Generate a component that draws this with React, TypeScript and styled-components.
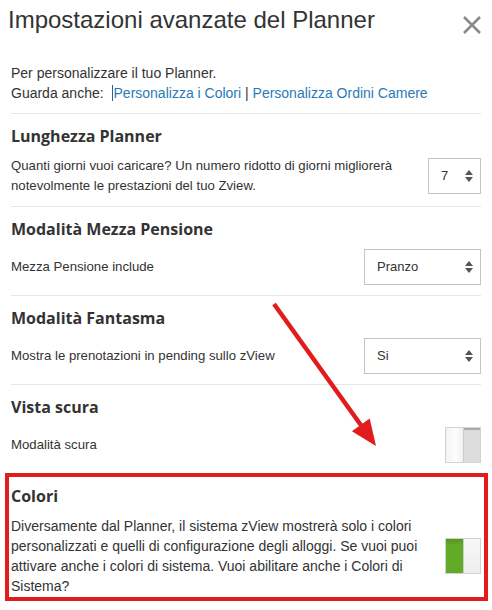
import React from 'react';
import styled, { createGlobalStyle } from 'styled-components';

const GlobalStyle = createGlobalStyle`
  html, body {
    margin: 0;
    padding: 0;
    background: #fff;
  }
  body {
    font-family: "Liberation Sans", Arial, sans-serif;
    font-size: 14px;
    line-height: 20px;
    color: #333;
  }
`;

const Page = styled.div`
  position: relative;
  width: 492px;
  box-sizing: border-box;
  padding: 6px 11px 0;
`;

const Header = styled.div`
  display: flex;
  justify-content: space-between;
  align-items: flex-start;
  margin-left: -3px;
`;

const Title = styled.h4`
  margin: 0;
  font-size: 24px;
  line-height: 28px;
  font-weight: normal;
  color: #333;
`;

const CloseButton = styled.button`
  margin: 9px -1px 0 0;
  padding: 0;
  width: 20px;
  height: 20px;
  border: none;
  background: none;
  cursor: pointer;
  display: flex;
`;

const Intro = styled.div`
  margin-top: 28px;
  padding-bottom: 10px;
  border-bottom: 1px solid #e6e6e6;
`;

const Link = styled.a`
  color: #2a7ab8;
  text-decoration: none;
`;

const Caret = styled.span`
  display: inline-block;
  width: 1px;
  height: 16px;
  margin: 0 1px 0 4px;
  background: #2a6496;
  vertical-align: -3px;
`;

const Section = styled.section<{ $highlight?: boolean; $last?: boolean }>`
  padding: ${p => (p.$highlight ? '7px 3px 1px 2px' : '10px 0')};
  margin: ${p => (p.$highlight ? '0 -7px 0 -6px' : '0')};
  border: ${p => (p.$highlight ? '4px solid #e21c1c' : 'none')};
  border-bottom: ${p => (p.$highlight ? '4px solid #e21c1c' : p.$last ? 'none' : '1px solid #e6e6e6')};
`;

const Heading = styled.h3`
  margin: 0 0 8px;
  font-family: "Open Sans", "Liberation Sans", sans-serif;
  font-size: 16px;
  line-height: 24px;
  font-weight: 700;
  color: #333;
`;

const Row = styled.div`
  display: flex;
  align-items: center;
  justify-content: space-between;
  min-height: 36px;
`;

const Description = styled.p<{ $large?: boolean }>`
  margin: 0;
  max-width: 410px;
  font-size: ${p => (p.$large ? 14 : 13.2)}px;
  line-height: 20px;
`;

const SelectBox = styled.div<{ $width: number }>`
  position: relative;
  box-sizing: border-box;
  width: ${p => p.$width}px;
  height: 36px;
  border: 1px solid #c4c4c4;
  background: #fff;
  display: flex;
  align-items: center;
  padding-left: 12px;
  font-size: 13px;
  color: #333;
  flex-shrink: 0;
`;

const SelectArrows = styled.svg`
  position: absolute;
  right: 7px;
  top: 50%;
  margin-top: -6px;
`;

const Toggle = styled.div`
  box-sizing: border-box;
  width: 36px;
  height: 36px;
  display: flex;
  border: 1px solid #d2d2d2;
  flex-shrink: 0;
`;

const ToggleHalf = styled.div<{ $tone: 'knob' | 'track' | 'green' | 'light' }>`
  flex: 1;
  box-sizing: border-box;
  background: ${p =>
    p.$tone === 'green'
      ? 'linear-gradient(#559a1c, #62ab27 20%, #62ab27)'
      : p.$tone === 'track'
      ? 'linear-gradient(#a9a9a9, #a9a9a9 2px, #dcdcdc 2px, #dedede)'
      : p.$tone === 'light'
      ? 'linear-gradient(#f7f7f7, #eeeeee)'
      : 'linear-gradient(90deg, #f4f4f4, #fdfdfd 60%, #f0f0f0)'};
  border-right: ${p => (p.$tone === 'knob' || p.$tone === 'green' ? '1px solid #cccccc' : 'none')};
`;

const ArrowOverlay = styled.svg`
  position: absolute;
  left: 0;
  top: 0;
  pointer-events: none;
`;

const Select = ({ value, width }: { value: string; width: number }) => (
  <SelectBox $width={width}>
    {value}
    <SelectArrows width="8" height="12" viewBox="0 0 8 12">
      <path d="M4 0 L8 5 L0 5 Z" fill="#555" />
      <path d="M0 7 L8 7 L4 12 Z" fill="#555" />
    </SelectArrows>
  </SelectBox>
);

const Switch = ({ on }: { on?: boolean }) => (
  <Toggle>
    {on ? (
      <>
        <ToggleHalf $tone="green" />
        <ToggleHalf $tone="light" />
      </>
    ) : (
      <>
        <ToggleHalf $tone="knob" />
        <ToggleHalf $tone="track" />
      </>
    )}
  </Toggle>
);

export default function App() {
  return (
    <>
      <GlobalStyle />
      <Page>
        <Header>
          <Title>Impostazioni avanzate del Planner</Title>
          <CloseButton aria-label="Chiudi">
            <svg width="20" height="20" viewBox="0 0 20 20">
              <path d="M2 2 L18 18 M18 2 L2 18" stroke="#8a8a8a" strokeWidth="2.6" />
            </svg>
          </CloseButton>
        </Header>

        <Intro>
          Per personalizzare il tuo Planner.
          <br />
          Guarda anche: <Caret />
          <Link href="#">Personalizza i Colori</Link> | <Link href="#">Personalizza Ordini Camere</Link>
        </Intro>

        <Section>
          <Heading>Lunghezza Planner</Heading>
          <Row>
            <Description>
              Quanti giorni vuoi caricare? Un numero ridotto di giorni migliorerà notevolmente le prestazioni del tuo Zview.
            </Description>
            <Select value="7" width={53} />
          </Row>
        </Section>

        <Section>
          <Heading>Modalità Mezza Pensione</Heading>
          <Row>
            <Description>Mezza Pensione include</Description>
            <Select value="Pranzo" width={117} />
          </Row>
        </Section>

        <Section>
          <Heading>Modalità Fantasma</Heading>
          <Row>
            <Description>Mostra le prenotazioni in pending sullo zView</Description>
            <Select value="Si" width={117} />
          </Row>
        </Section>

        <Section $last>
          <Heading>Vista scura</Heading>
          <Row>
            <Description>Modalità scura</Description>
            <Switch />
          </Row>
        </Section>

        <Section $highlight>
          <Heading>Colori</Heading>
          <Row>
            <Description $large>
              Diversamente dal Planner, il sistema zView mostrerà solo i colori personalizzati e quelli di configurazione degli alloggi. Se vuoi puoi attivare anche i colori di sistema. Vuoi abilitare anche i Colori di Sistema?
            </Description>
            <Switch on />
          </Row>
        </Section>

        <ArrowOverlay width="492" height="610" viewBox="0 0 492 610">
          <line x1="274" y1="304" x2="363" y2="428" stroke="#e21c1c" strokeWidth="4.5" />
          <polygon points="376,446 351.9,431.3 369.7,418.5" fill="#e21c1c" />
        </ArrowOverlay>
      </Page>
    </>
  );
}
